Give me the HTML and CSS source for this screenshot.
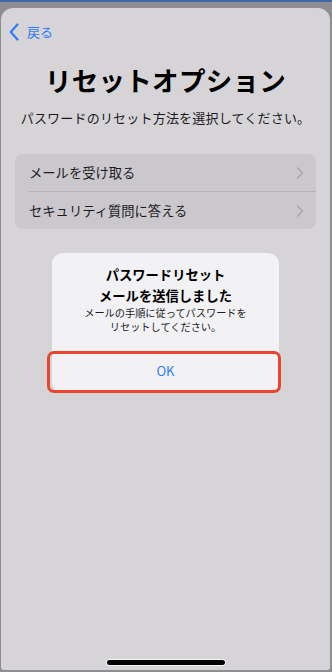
FILE: index.html
```html
<!DOCTYPE html>
<html lang="ja">
<head>
<meta charset="utf-8">
<link rel="stylesheet" href="styles.css">
</head>
<body>
<div class="frame">
  <div class="screen">
    <div class="nav">
      <svg class="back-icon" width="10" height="18" viewBox="0 0 10 18"><path d="M8.5 1.5 L1.8 9 L8.5 16.5" fill="none" stroke="#2f7cf6" stroke-width="2.2" stroke-linecap="round" stroke-linejoin="round"/></svg>
      <span class="back-text">戻る</span>
    </div>
    <h1 class="title">リセットオプション</h1>
    <p class="subtitle">パスワードのリセット方法を選択してください。</p>
    <div class="card">
      <div class="row"><span>メールを受け取る</span><svg class="chev" width="8" height="12" viewBox="0 0 8 12"><path d="M1.5 1 L6.5 6 L1.5 11" fill="none" stroke="#a7a6ab" stroke-width="1.5" stroke-linecap="round" stroke-linejoin="round"/></svg></div>
      <div class="row"><span>セキュリティ質問に答える</span><svg class="chev" width="8" height="12" viewBox="0 0 8 12"><path d="M1.5 1 L6.5 6 L1.5 11" fill="none" stroke="#a7a6ab" stroke-width="1.5" stroke-linecap="round" stroke-linejoin="round"/></svg></div>
    </div>
    <div class="alert">
      <div class="alert-title">パスワードリセット<br>メールを送信しました</div>
      <div class="alert-msg">メールの手順に従ってパスワードを<br>リセットしてください。</div>
      <div class="alert-btn">OK</div>
      <div class="highlight"></div>
    </div>
    <div class="home"></div>
  </div>
</div>
</body>
</html>
```
FILE: styles.css
```css
html, body {
  margin: 0;
  padding: 0;
}
body {
  width: 332px;
  height: 672px;
  overflow: hidden;
  background: #8e8e90;
  font-family: "Noto Sans CJK JP", "Noto Sans", sans-serif;
}
.frame {
  height: 672px;
  box-sizing: border-box;
  border-top: 2px solid #3b69ac;
  padding: 6px 2px 2px 1px;
}
.screen {
  height: 100%;
  background: #d6d4d7;
  border-radius: 12px 12px 3px 3px;
  display: flex;
  flex-direction: column;
}
.nav {
  display: flex;
  align-items: center;
  gap: 8px;
  height: 20px;
  margin-top: 14px;
  padding-left: 8px;
}
.back-text {
  color: #2f7cf6;
  font-size: 13px;
  line-height: 20px;
}
.title {
  margin: 20px 0 0;
  text-align: center;
  font-size: 26.5px;
  line-height: 36px;
  font-weight: 700;
  color: #000;
  letter-spacing: 0.3px;
}
.subtitle {
  margin: 10px 0 0;
  text-align: center;
  font-size: 13px;
  letter-spacing: 0.2px;
  line-height: 20px;
  color: #1a1a1c;
}
.card {
  margin: 26px 14px 0 14px;
  background: #cac8cd;
  border-radius: 8px;
  padding-left: 14px;
}
.row {
  height: 37px;
  display: flex;
  align-items: center;
  justify-content: space-between;
  padding-right: 12px;
  font-size: 13.3px;
  color: #1c1c1e;
}
.row + .row {
  border-top: 1px solid #b4b2b7;
}
.alert {
  position: relative;
  align-self: center;
  width: 227px;
  margin-top: 24px;
  background: #f2f1f4;
  border-radius: 11px;
  text-align: center;
}
.alert-title {
  padding-top: 11px;
  font-size: 13.3px;
  line-height: 21px;
  font-weight: 700;
  color: #000;
}
.alert-msg {
  font-size: 10.2px;
  line-height: 14px;
  color: #1c1c1e;
}
.alert-btn {
  margin-top: 15px;
  height: 44px;
  line-height: 44px;
  color: #2e7cf6;
  font-size: 13px;
}
.highlight {
  position: absolute;
  left: -5px;
  right: -2px;
  bottom: 0;
  height: 42px;
  box-sizing: border-box;
  border: 3px solid #e9442f;
  border-radius: 7px;
}
.home {
  align-self: center;
  margin-top: auto;
  margin-bottom: 5px;
  width: 118px;
  height: 5px;
  background: #000;
  border-radius: 3px;
  box-shadow: 0 0 0 1px #f4f4f4;
}
```
